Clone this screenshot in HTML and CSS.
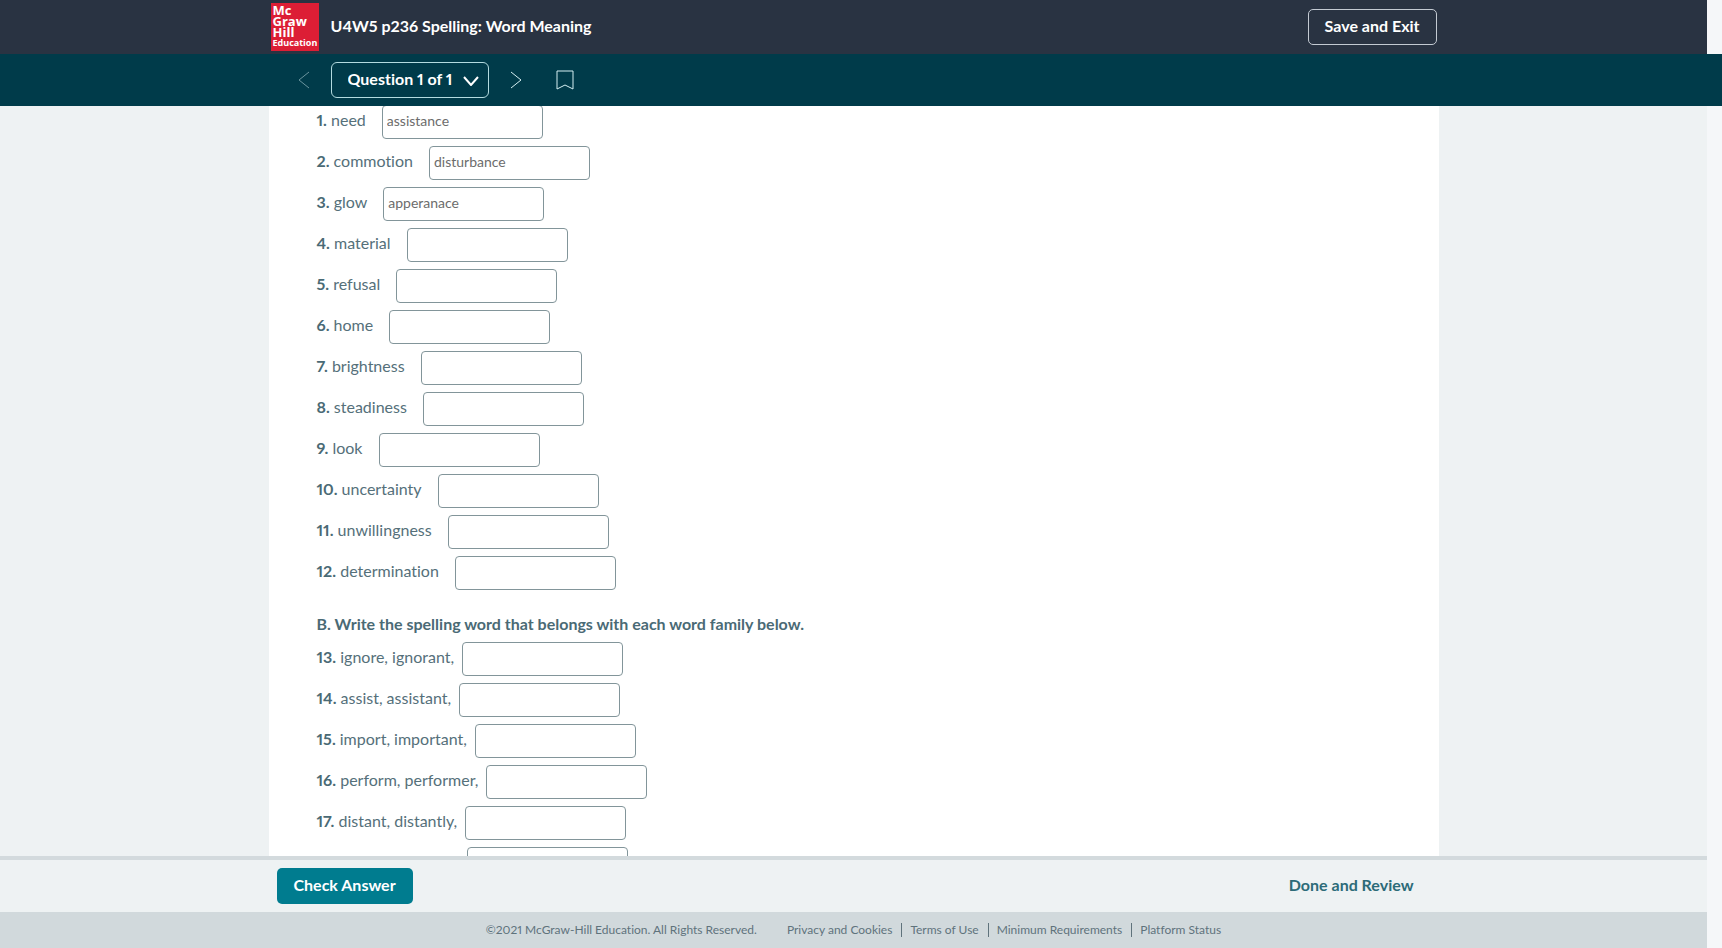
FILE: index.html
```html
<!DOCTYPE html>
<html lang="en">
<head>
	<meta charset="UTF-8">
	<title>U4W5 p236 Spelling: Word Meaning</title>
	<meta name="viewport" content="width=device-width,initial-scale=1">
	<link rel="stylesheet" href="styles.css">
</head>
<body>
	<header class="header">
		<div class="container header-inner">
			<div class="logo">
				<span>Mc</span>
				<span>Graw</span>
				<span>Hill</span>
				<span class="logo-small">Education</span>
			</div>
			<h1 class="title">U4W5 p236 Spelling: Word Meaning</h1>
			<button class="btn btn-outline" type="button">Save and Exit</button>
		</div>
	</header>
	<nav class="toolbar">
		<div class="container toolbar-inner">
			<button class="icon-btn prev" type="button" aria-label="Previous question" disabled>
				<svg width="12" height="18" viewBox="0 0 12 18"><path d="M11 1L1 9l10 8"/></svg>
			</button>
			<div class="picker">
				<select class="picker-select" aria-label="Question">
					<option>Question 1 of 1</option>
				</select>
				<svg class="picker-arrow" width="16" height="10" viewBox="0 0 16 10"><path d="M1 1l7 8 7-8"/></svg>
			</div>
			<button class="icon-btn next" type="button" aria-label="Next question">
				<svg width="12" height="18" viewBox="0 0 12 18"><path d="M1 1l10 8-10 8"/></svg>
			</button>
			<button class="icon-btn bookmark" type="button" aria-label="Bookmark">
				<svg width="18" height="20" viewBox="0 0 18 20"><path d="M1 1h16v18l-8-4-8 4z"/></svg>
			</button>
		</div>
	</nav>
	<main class="content">
		<form class="container sheet" id="quiz">
			<ol class="list">
				<li class="row"><label for="q1"><b>1.</b> need</label><input id="q1" type="text" value="assistance"></li>
				<li class="row"><label for="q2"><b>2.</b> commotion</label><input id="q2" type="text" value="disturbance"></li>
				<li class="row"><label for="q3"><b>3.</b> glow</label><input id="q3" type="text" value="apperanace"></li>
				<li class="row"><label for="q4"><b>4.</b> material</label><input id="q4" type="text"></li>
				<li class="row"><label for="q5"><b>5.</b> refusal</label><input id="q5" type="text"></li>
				<li class="row"><label for="q6"><b>6.</b> home</label><input id="q6" type="text"></li>
				<li class="row"><label for="q7"><b>7.</b> brightness</label><input id="q7" type="text"></li>
				<li class="row"><label for="q8"><b>8.</b> steadiness</label><input id="q8" type="text"></li>
				<li class="row"><label for="q9"><b>9.</b> look</label><input id="q9" type="text"></li>
				<li class="row"><label for="q10"><b>10.</b> uncertainty</label><input id="q10" type="text"></li>
				<li class="row"><label for="q11"><b>11.</b> unwillingness</label><input id="q11" type="text"></li>
				<li class="row"><label for="q12"><b>12.</b> determination</label><input id="q12" type="text"></li>
			</ol>
			<h2 class="subhead">B. Write the spelling word that belongs with each word family below.</h2>
			<ol class="list family">
				<li class="row"><label for="q13"><b>13.</b> ignore, ignorant,</label><input id="q13" type="text"></li>
				<li class="row"><label for="q14"><b>14.</b> assist, assistant,</label><input id="q14" type="text"></li>
				<li class="row"><label for="q15"><b>15.</b> import, important,</label><input id="q15" type="text"></li>
				<li class="row"><label for="q16"><b>16.</b> perform, performer,</label><input id="q16" type="text"></li>
				<li class="row"><label for="q17"><b>17.</b> distant, distantly,</label><input id="q17" type="text"></li>
				<li class="row row-last"><input type="text" aria-label="18"></li>
			</ol>
		</form>
	</main>
	<div class="actions">
		<div class="container actions-inner">
			<button class="btn btn-primary" type="submit" form="quiz">Check Answer</button>
			<button class="btn btn-text" type="button">Done and Review</button>
		</div>
	</div>
	<footer class="footer">
		<p class="copyright">©2021 McGraw-Hill Education. All Rights Reserved.</p>
		<ul class="links">
			<li><a href="#">Privacy and Cookies</a></li>
			<li><a href="#">Terms of Use</a></li>
			<li><a href="#">Minimum Requirements</a></li>
			<li><a href="#">Platform Status</a></li>
		</ul>
	</footer>
</body>
</html>
```
FILE: styles.css
```css
*{
	box-sizing:border-box;
	padding:0;
	margin:0;
}
body{
	display:flex;
	flex-direction:column;
	height:100vh;
	overflow:hidden;
	background-color:#f5f7f9;
	color:#55707a;
	font-family:Lato,"Liberation Sans",sans-serif;
	font-size:16px;
	font-variant-ligatures:none;
	font-variant-numeric:proportional-nums;
	line-height:22px;
}
button,input,select{
	font-family:inherit;
	font-variant:inherit;
}
svg{
	display:block;
	fill:none;
	stroke:currentColor;
}
.container{
	width:100%;
	max-width:1170px;
	margin:0 auto;
}
.header,.content,.actions,.footer{
	margin-right:15px;
}

.header{
	flex:none;
	background-color:#293342;
}
.header-inner{
	display:flex;
	align-items:center;
	height:54px;
	padding:0 2px;
}
.logo{
	display:flex;
	flex-direction:column;
	width:48px;
	height:48px;
	padding:2px;
	background-color:#dc1e35;
	color:#fff;
	font-family:"Open Sans",sans-serif;
	font-size:13px;
	font-weight:700;
	line-height:11px;
}
.logo-small{
	font-size:9px;
	line-height:10px;
}
.title{
	flex:1;
	margin-left:12px;
	padding-bottom:2px;
	color:#fff;
	font-size:16px;
}
.btn{
	height:36px;
	padding:0 16px 3px;
	border:1px solid transparent;
	border-radius:5px;
	background:none;
	font-size:16px;
	font-weight:700;
}
.btn-outline{
	border-color:#c3cad2;
	color:#fff;
}

.toolbar{
	flex:none;
	padding-right:15px;
	background-color:#003b4a;
	color:#d5eff2;
}
.toolbar-inner{
	display:flex;
	align-items:center;
	height:52px;
	padding-left:24px;
}
.icon-btn{
	padding:5px;
	border:none;
	background:none;
	color:inherit;
}
.prev{
	opacity:0.5;
}
.picker{
	position:relative;
	width:158px;
	margin:0 16px;
}
.picker-select{
	-webkit-appearance:none;
	appearance:none;
	width:100%;
	height:36px;
	padding:0 16px 3px;
	border:1px solid #b3dbe0;
	border-radius:6px;
	background:none;
	color:#fff;
	font-size:16px;
	font-weight:700;
}
.picker-arrow{
	position:absolute;
	right:10px;
	top:14px;
	stroke:#fff;
	stroke-width:2;
	pointer-events:none;
}
.bookmark{
	margin-left:24px;
}

.content{
	flex:1;
	min-height:0;
	overflow:hidden;
	background-color:#eef2f3;
}
.sheet{
	padding:0 48px;
	margin-top:-5px;
	background-color:#fff;
}
.list{
	list-style:none;
}
.row{
	display:flex;
	align-items:center;
	gap:16px;
	height:41px;
}
.family .row{
	gap:8px;
}
.family .row-last{
	padding-left:150px;
}
.row label{
	padding-bottom:4px;
}
.row input{
	width:161px;
	height:34px;
	padding:0 4px 2px;
	border:1px solid #82959a;
	border-radius:4px;
	background-color:#fff;
	color:#6c6c6c;
	font-size:14px;
}
.row b,.subhead{
	color:#4a6a75;
}
.subhead{
	padding:20px 0 3px;
	font-size:16px;
}

.actions{
	flex:none;
	border-top:4px solid #d3dadd;
	background-color:#eef2f3;
}
.actions-inner{
	display:flex;
	align-items:center;
	justify-content:space-between;
	height:52px;
	padding:0 8px;
}
.btn-primary{
	background-color:#007c8f;
	color:#fff;
}
.btn-text{
	color:#2c6b78;
}

.footer{
	display:flex;
	flex:none;
	align-items:center;
	justify-content:center;
	gap:30px;
	height:36px;
	background-color:#d1d9dc;
	color:#5f737c;
	font-size:12px;
	line-height:14px;
}
.links{
	display:flex;
	list-style:none;
}
.links li+li{
	margin-left:9px;
	padding-left:8px;
	border-left:1px solid #5f737c;
}
.links a{
	color:inherit;
	text-decoration:none;
}
```
